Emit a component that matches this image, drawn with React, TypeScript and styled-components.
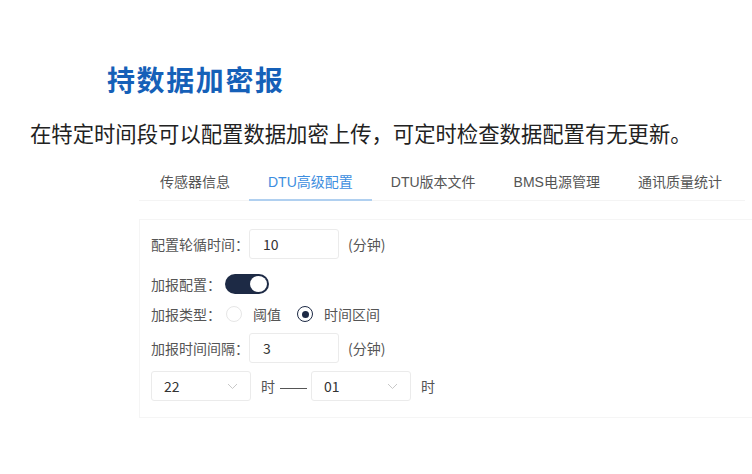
import React, { useState } from "react";
import styled, { createGlobalStyle } from "styled-components";

const Global = createGlobalStyle`
  html, body { margin: 0; padding: 0; background: #fff; }
  body { font-family: "Noto Sans CJK SC", "Noto Sans", sans-serif; width: 752px; height: 474px; overflow: hidden; }
  * { box-sizing: border-box; }
`;

const Page = styled.div`
  width: 752px;
  height: 474px;
  background: #fff;
`;

const Title = styled.h1`
  margin: 0;
  padding: 60px 0 0 107px;
  font-size: 28px;
  line-height: 38px;
  font-weight: 700;
  color: #1560b8;
  letter-spacing: 1.6px;
`;

const Subtitle = styled.p`
  margin: 0;
  padding: 20px 0 0 30px;
  font-size: 21.35px;
  line-height: 30px;
  color: #222;
  white-space: nowrap;
`;

const Tabs = styled.div`
  display: flex;
  margin: 17px 0 0 139px;
  padding-left: 2px;
  width: 606px;
  border-bottom: 1px solid #f4f4f4;
`;

const Tab = styled.div<{ $active?: boolean }>`
  padding: 0 19px;
  height: 36px;
  line-height: 34px;
  font-size: 14px;
  font-family: "Liberation Sans", "Noto Sans CJK SC", sans-serif;
  color: ${(p) => (p.$active ? "#3d8ee0" : "#555")};
  border-bottom: 2px solid ${(p) => (p.$active ? "#b0d0f0" : "transparent")};
  margin-bottom: -1px;
  white-space: nowrap;
`;

const Panel = styled.div`
  margin: 18px 0 0 139px;
  width: 613px;
  height: 199px;
  border: 1px solid #f5f5f5;
  border-right: none;
  padding: 9px 0 0 11px;
  display: flex;
  flex-direction: column;
`;

const Row = styled.div<{ $mt?: number; $h: number }>`
  display: flex;
  align-items: center;
  height: ${(p) => p.$h}px;
  margin-top: ${(p) => p.$mt ?? 0}px;
  font-size: 14px;
  color: #555;
`;

const Label = styled.span`
  font-size: 14px;
  color: #555;
  white-space: nowrap;
`;

const Input = styled.div`
  width: 90px;
  height: 30px;
  border: 1px solid #ebebeb;
  border-radius: 3px;
  padding-left: 13px;
  display: flex;
  align-items: center;
  font-size: 14px;
  color: #333;
`;

const Unit = styled.span`
  margin-left: 9px;
  color: #555;
  font-size: 14px;
`;

const Switch = styled.button<{ $on: boolean }>`
  width: 44px;
  height: 20px;
  margin-left: 4px;
  border-radius: 10px;
  border: none;
  padding: 0;
  background: ${(p) => (p.$on ? "#1d2a45" : "#ccc")};
  position: relative;
  cursor: pointer;
  &::after {
    content: "";
    position: absolute;
    top: 2px;
    left: ${(p) => (p.$on ? "25px" : "2px")};
    width: 17px;
    height: 16px;
    border-radius: 50%;
    background: #fff;
  }
`;

const RadioGroup = styled.div`
  display: flex;
  align-items: center;
  margin-left: 5px;
  gap: 16px;
`;

const RadioItem = styled.label`
  display: flex;
  align-items: center;
  cursor: pointer;
  font-size: 14px;
  color: #555;
`;

const RadioCircle = styled.span<{ $checked: boolean }>`
  width: 16px;
  height: 16px;
  border-radius: 50%;
  border: 1px solid ${(p) => (p.$checked ? "#1d2a45" : "#e6e6e6")};
  margin-right: 11px;
  display: flex;
  align-items: center;
  justify-content: center;
  &::after {
    content: "";
    width: 7px;
    height: 7px;
    border-radius: 50%;
    background: ${(p) => (p.$checked ? "#1d2a45" : "transparent")};
  }
`;

const Select = styled.div`
  width: 100px;
  height: 30px;
  border: 1px solid #ebebeb;
  border-radius: 3px;
  padding: 0 12px 0 12px;
  display: flex;
  align-items: center;
  justify-content: space-between;
  font-size: 14px;
  color: #333;
`;

const Sep = styled.span`
  margin: 0 4px 0 10px;
  color: #555;
  font-size: 14px;
  white-space: nowrap;
`;

const Dash = styled.span`
  display: inline-block;
  width: 27px;
  height: 1px;
  background: #555;
  margin-left: 5px;
  vertical-align: middle;
`;

const Hour = styled.span`
  margin-left: 10px;
  color: #555;
  font-size: 14px;
`;

const Chevron = () => (
  <svg width="11" height="7" viewBox="0 0 11 7" fill="none">
    <path d="M1 1l4.5 4.5L10 1" stroke="#c8c8c8" strokeWidth="1" />
  </svg>
);

export default function App() {
  const [on, setOn] = useState(true);
  const [type, setType] = useState("range");
  const tabs = ["传感器信息", "DTU高级配置", "DTU版本文件", "BMS电源管理", "通讯质量统计"];
  return (
    <Page>
      <Global />
      <Title>持数据加密报</Title>
      <Subtitle>在特定时间段可以配置数据加密上传，可定时检查数据配置有无更新。</Subtitle>
      <Tabs>
        {tabs.map((t, i) => (
          <Tab key={t} $active={i === 1}>
            {t}
          </Tab>
        ))}
      </Tabs>
      <Panel>
        <Row $h={30}>
          <Label>配置轮循时间：</Label>
          <Input>10</Input>
          <Unit>(分钟)</Unit>
        </Row>
        <Row $h={20} $mt={15}>
          <Label>加报配置：</Label>
          <Switch $on={on} onClick={() => setOn(!on)} aria-label="加报配置" />
        </Row>
        <Row $h={20} $mt={10}>
          <Label>加报类型：</Label>
          <RadioGroup>
            <RadioItem onClick={() => setType("threshold")}>
              <RadioCircle $checked={type === "threshold"} />
              阈值
            </RadioItem>
            <RadioItem onClick={() => setType("range")}>
              <RadioCircle $checked={type === "range"} />
              时间区间
            </RadioItem>
          </RadioGroup>
        </Row>
        <Row $h={30} $mt={9}>
          <Label>加报时间间隔：</Label>
          <Input>3</Input>
          <Unit>(分钟)</Unit>
        </Row>
        <Row $h={30} $mt={8}>
          <Select>
            22
            <Chevron />
          </Select>
          <Sep>
            时<Dash />
          </Sep>
          <Select>
            01
            <Chevron />
          </Select>
          <Hour>时</Hour>
        </Row>
      </Panel>
    </Page>
  );
}
